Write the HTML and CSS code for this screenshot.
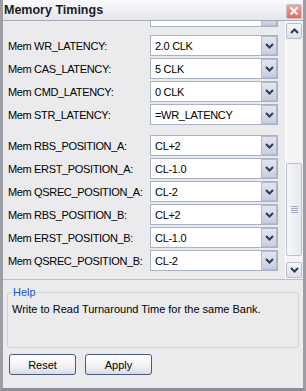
FILE: index.html
```html
<!DOCTYPE html>
<html lang="en">
<head>
    <meta charset="UTF-8">
    <meta name="viewport" content="width=device-width, initial-scale=1.0">
    <title>Memory Timings</title>
    <link rel="stylesheet" href="styles.css">
</head>
<body>
    <div class="window">
        <div class="titlebar">
            <span class="title">Memory Timings</span>
            <span class="close">
                <svg width="10" height="10" viewBox="0 0 10 10">
                    <path d="M1.5 1.5 L8.5 8.5 M8.5 1.5 L1.5 8.5" stroke="#ffffff" stroke-width="2"/>
                </svg>
            </span>
        </div>

        <div class="scroll-area">
            <div class="viewport">
                <div class="group first">
                    <div class="row">
                        <span class="label"></span>
                        <div class="combo"><span class="value"></span><span class="drop"></span></div>
                    </div>
                </div>

                <div class="group">
                    <div class="row">
                        <span class="label">Mem WR_LATENCY:</span>
                        <div class="combo"><span class="value">2.0 CLK</span><span class="drop"></span></div>
                    </div>
                    <div class="row">
                        <span class="label">Mem CAS_LATENCY:</span>
                        <div class="combo"><span class="value">5 CLK</span><span class="drop"></span></div>
                    </div>
                    <div class="row">
                        <span class="label">Mem CMD_LATENCY:</span>
                        <div class="combo"><span class="value">0 CLK</span><span class="drop"></span></div>
                    </div>
                    <div class="row">
                        <span class="label">Mem STR_LATENCY:</span>
                        <div class="combo"><span class="value">=WR_LATENCY</span><span class="drop"></span></div>
                    </div>
                </div>

                <div class="group positions">
                    <div class="row">
                        <span class="label">Mem RBS_POSITION_A:</span>
                        <div class="combo"><span class="value">CL+2</span><span class="drop"></span></div>
                    </div>
                    <div class="row">
                        <span class="label">Mem ERST_POSITION_A:</span>
                        <div class="combo"><span class="value">CL-1.0</span><span class="drop"></span></div>
                    </div>
                    <div class="row">
                        <span class="label">Mem QSREC_POSITION_A:</span>
                        <div class="combo"><span class="value">CL-2</span><span class="drop"></span></div>
                    </div>
                    <div class="row">
                        <span class="label">Mem RBS_POSITION_B:</span>
                        <div class="combo"><span class="value">CL+2</span><span class="drop"></span></div>
                    </div>
                    <div class="row">
                        <span class="label">Mem ERST_POSITION_B:</span>
                        <div class="combo"><span class="value">CL-1.0</span><span class="drop"></span></div>
                    </div>
                    <div class="row">
                        <span class="label">Mem QSREC_POSITION_B:</span>
                        <div class="combo"><span class="value">CL-2</span><span class="drop"></span></div>
                    </div>
                </div>
            </div>

            <div class="scrollbar">
                <span class="sb-button up"></span>
                <div class="track">
                    <div class="thumb"><span class="grip"></span></div>
                </div>
                <span class="sb-button down"></span>
            </div>
        </div>

        <fieldset class="help">
            <legend>Help</legend>
            <p>Write to Read Turnaround Time for the same Bank.</p>
        </fieldset>

        <div class="buttons">
            <button type="button">Reset</button>
            <button type="button">Apply</button>
        </div>
    </div>

    <script>
        // put the same chevron in every combo and scroll button
        const chevron = '<svg width="9" height="6" viewBox="0 0 9 6"><path d="M1 1 L4.5 4.5 L8 1" fill="none" stroke="#2e3a55" stroke-width="2"/></svg>';
        document.querySelectorAll('.drop, .sb-button.down').forEach(el => el.innerHTML = chevron);
        document.querySelector('.sb-button.up').innerHTML = '<svg width="9" height="6" viewBox="0 0 9 6"><path d="M1 5 L4.5 1.5 L8 5" fill="none" stroke="#2e3a55" stroke-width="2"/></svg>';
    </script>
</body>
</html>
```

FILE: styles.css
```css
body {
    margin: 0;
    font-family: "Liberation Sans", Arial, sans-serif;
    font-size: 11px;
    color: #000000;
    background-color: #ffffff;
}
.window {
    width: 306px;
    height: 391px;
    box-sizing: border-box;
    display: flex;
    flex-direction: column;
    background-color: #ebebee;
    border-left: 3px solid #9d9da6;
    border-right: 3px solid #9d9da6;
    border-bottom: 3px solid #8d8d96;
}
.titlebar {
    height: 20px;
    flex: none;
    display: flex;
    align-items: center;
    justify-content: space-between;
    padding: 0 1px 0 1px;
    background: linear-gradient(#fbfbfd, #e4e5ec);
    border-bottom: 1px solid #a9a9b2;
}
.title {
    font-weight: bold;
    font-size: 12.5px;
    color: #1b1b24;
}
.close {
    width: 14px;
    height: 13px;
    display: flex;
    align-items: center;
    justify-content: center;
    margin-top: 2px;
    background: linear-gradient(#f2a7a0, #dd6a60);
    border: 1px solid #c7c2c6;
    border-radius: 2px;
}
.scroll-area {
    height: 259px;
    flex: none;
    display: flex;
    padding-right: 1px;
    box-sizing: border-box;
    border-bottom: 1px solid #bdbdc6;
}
.viewport {
    flex: 1;
    overflow: hidden;
}
.group {
    display: flex;
    flex-direction: column;
    gap: 2px;
    margin-top: 8px;
}
.group.first {
    margin-top: -15px;
}
.group.positions {
    margin-top: 10px;
}
.row {
    display: grid;
    grid-template-columns: 142px 128px;
    align-items: center;
    padding-left: 5px;
    height: 21px;
}
.label {
    white-space: nowrap;
    letter-spacing: -0.35px;
}
.combo {
    height: 21px;
    box-sizing: border-box;
    display: flex;
    align-items: center;
    background-color: #ffffff;
    border: 1px solid #a7b2c4;
}
.value {
    flex: 1;
    padding-left: 4px;
    letter-spacing: -0.3px;
}
.drop {
    width: 16px;
    height: 19px;
    box-sizing: border-box;
    display: flex;
    align-items: center;
    justify-content: center;
    background: linear-gradient(#e3e6f0, #c9cee0);
    border: 1px solid #b4bbcf;
}
.scrollbar {
    width: 17px;
    display: flex;
    flex-direction: column;
    padding: 2px 0 1px 0;
    box-sizing: border-box;
    background-color: #f4f4f2;
    border-left: 1px solid #ffffff;
}
.sb-button {
    height: 16px;
    flex: none;
    box-sizing: border-box;
    display: flex;
    align-items: center;
    justify-content: center;
    background: linear-gradient(#f6f7fb, #dcdfea);
    border: 1px solid #b9bfd1;
    border-radius: 2px;
}
.track {
    flex: 1;
    padding-top: 124px;
}
.thumb {
    height: 93px;
    box-sizing: border-box;
    display: flex;
    align-items: center;
    justify-content: center;
    background: linear-gradient(90deg, #f6f7fa, #e6e8ef);
    border: 1px solid #bcc2d3;
    border-radius: 2px;
}
.grip {
    width: 7px;
    height: 7px;
    background: repeating-linear-gradient(#a4aabb 0, #a4aabb 1px, transparent 1px, transparent 2px);
}
.help {
    height: 63px;
    flex: none;
    box-sizing: border-box;
    margin: 5px 4px 0 4px;
    padding: 0 0 0 4px;
    border: 1px solid #d2d2cb;
    border-radius: 3px;
}
.help legend {
    padding: 0 1px;
    margin-left: 0;
    line-height: 14px;
    color: #2053c8;
}
.help p {
    margin: 4px 0 0 0;
}
.buttons {
    display: flex;
    gap: 9px;
    padding: 6px 0 0 6px;
}
button {
    width: 67px;
    height: 21px;
    padding: 0;
    font-family: "Liberation Sans", Arial, sans-serif;
    font-size: 11px;
    color: #000000;
    background: linear-gradient(#ffffff, #f1f1f4 60%, #d8dbe6);
    border: 1px solid #4a5a7c;
    border-radius: 3px;
}
```
